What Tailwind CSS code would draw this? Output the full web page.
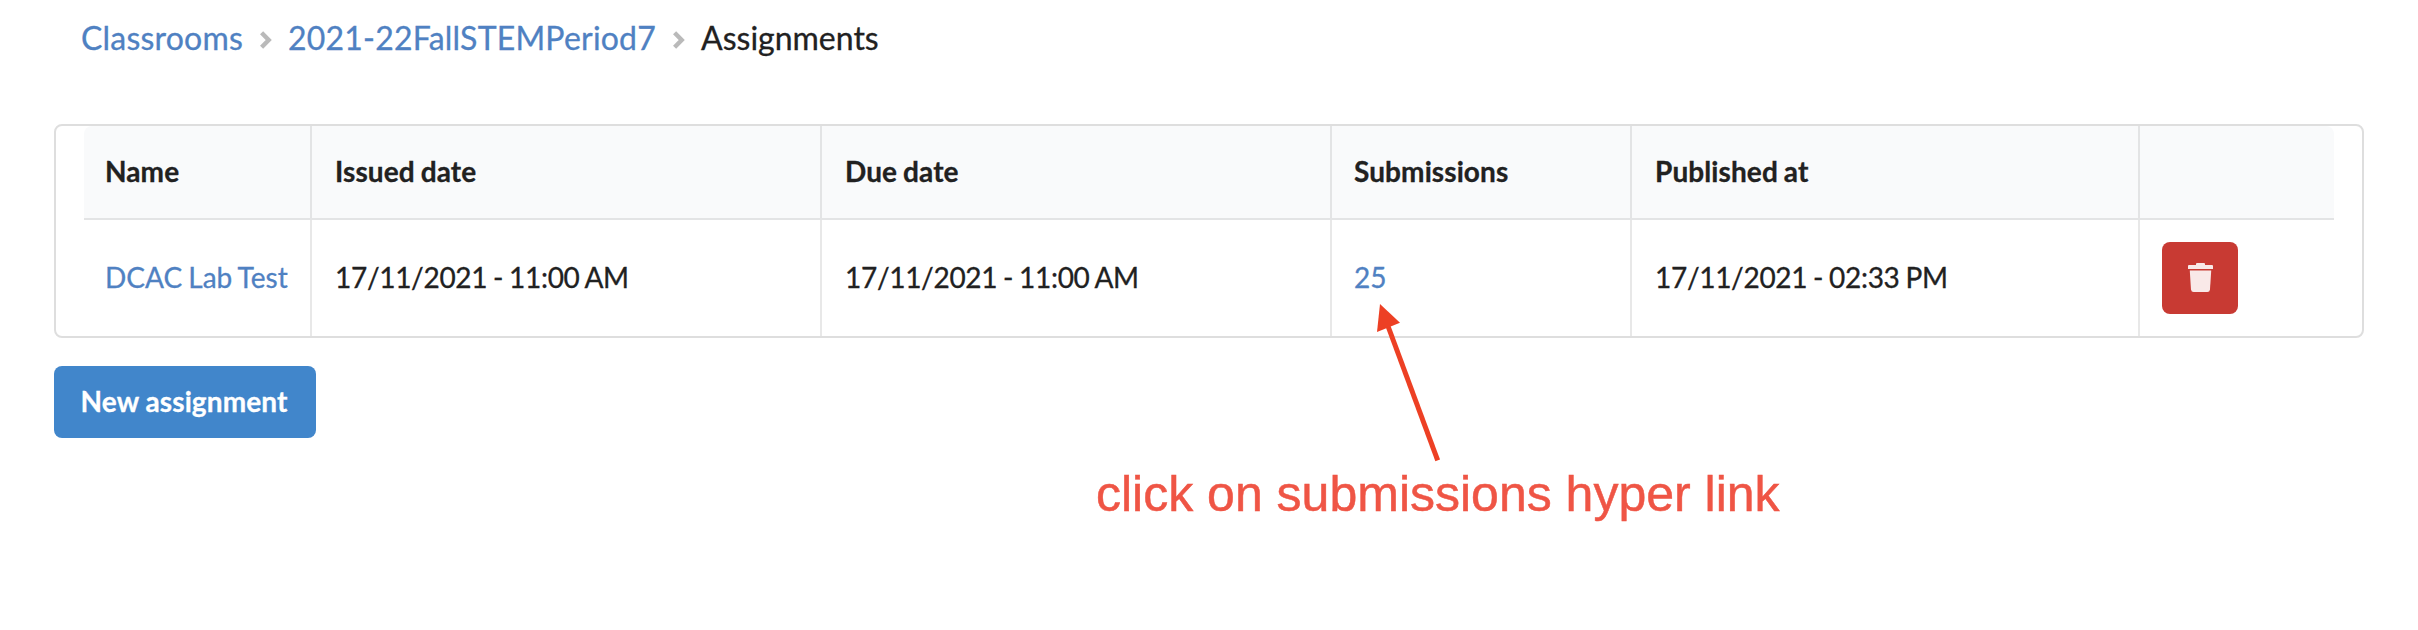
<!DOCTYPE html>
<html lang="en">
<head>
  <meta charset="UTF-8" />
  <meta name="viewport" content="width=device-width, initial-scale=1.0" />
  <title>Assignments</title>
  <script src="https://cdn.jsdelivr.net/npm/@tailwindcss/browser@4"></script>
</head>
<body class="relative min-h-screen overflow-hidden bg-white font-[Lato,sans-serif] text-[28px] leading-9 text-[#212121] [-webkit-text-stroke:0.3px]">

  <!-- Breadcrumb -->
  <nav class="flex h-[124px] items-start pt-[17px] pl-[81px] text-[32px] leading-[42px]">
    <a href="#" class="w-[163px] tracking-[0.2px] whitespace-nowrap text-[#4f81c2]">Classrooms</a>
    <svg class="mt-[14px] ml-4 h-[18px] w-3" viewBox="0 0 12 18" fill="none" stroke="#bababa" stroke-width="4.4"><path d="M1.6 1.8L8.7 9L1.6 16.2" /></svg>
    <a href="#" class="ml-4 w-[368px] tracking-[0.2px] whitespace-nowrap text-[#4f81c2]">2021-22FallSTEMPeriod7</a>
    <svg class="mt-[14px] ml-[17px] h-[18px] w-3" viewBox="0 0 12 18" fill="none" stroke="#bababa" stroke-width="4.4"><path d="M1.6 1.8L8.7 9L1.6 16.2" /></svg>
    <span class="ml-4">Assignments</span>
  </nav>

  <!-- Assignments Table -->
  <div class="ml-[54px] h-[214px] w-[2310px] rounded-lg border-2 border-[#dedede] px-7">
    <table class="w-[2250px] table-fixed border-separate border-spacing-0 text-left">
      <colgroup>
        <col class="w-[226px]" />
        <col class="w-[510px]" />
        <col class="w-[510px]" />
        <col class="w-[300px]" />
        <col class="w-[508px]" />
        <col class="w-[196px]" />
      </colgroup>
      <thead>
        <tr class="h-[94px] tracking-[0.1px] [word-spacing:-1px]">
          <th class="rounded-tl-lg border-b-2 border-[#e3e4e5] bg-[#f9fafb] pt-0 pr-0 pb-0.5 pl-[21px] font-bold">Name</th>
          <th class="border-b-2 border-l-2 border-[#e3e4e5] bg-[#f9fafb] pt-0 pb-0.5 pl-[23px] font-bold">Issued date</th>
          <th class="border-b-2 border-l-2 border-[#e3e4e5] bg-[#f9fafb] pt-0 pb-0.5 pl-[23px] font-bold">Due date</th>
          <th class="border-b-2 border-l-2 border-[#e3e4e5] bg-[#f9fafb] pt-0 pb-0.5 pl-[22px] font-bold">Submissions</th>
          <th class="border-b-2 border-l-2 border-[#e3e4e5] bg-[#f9fafb] pt-0 pb-0.5 pl-[23px] font-bold">Published at</th>
          <th class="rounded-tr-lg border-b-2 border-l-2 border-[#e3e4e5] bg-[#f9fafb]"></th>
        </tr>
      </thead>
      <tbody>
        <tr class="h-[116px] [word-spacing:-1px]">
          <td class="pt-0 pb-0.5 pl-[21px] whitespace-nowrap"><a href="#" class="text-[#4f81c2]">DCAC Lab Test</a></td>
          <td class="border-l-2 border-[#e8e8e8] pt-0 pb-0.5 pl-[23px] tracking-[-0.3px]">17/11/2021 - 11:00 AM</td>
          <td class="border-l-2 border-[#e8e8e8] pt-0 pb-0.5 pl-[23px] tracking-[-0.3px]">17/11/2021 - 11:00 AM</td>
          <td class="border-l-2 border-[#e8e8e8] pt-0 pb-0.5 pl-[22px]"><a href="#" class="text-[#4f81c2]">25</a></td>
          <td class="border-l-2 border-[#e8e8e8] pt-0 pb-0.5 pl-[23px] tracking-[-0.3px]">17/11/2021 - 02:33 PM</td>
          <td class="border-l-2 border-[#e8e8e8] py-0 pl-[22px]">
            <button type="button" aria-label="Delete" class="flex h-[72px] w-[76px] items-center justify-center rounded-lg bg-[#c83a33]">
              <svg class="-mt-0.5 h-[29px] w-[25px]" viewBox="0 0 25 29" fill="#f9e9e8">
                <path d="M1 2H8V1Q8 0 9 0H16Q17 0 17 1V2H24Q25 2 25 3V6H0V3Q0 2 1 2Z" />
                <path d="M1.8 7.4H23.2L22 26.5Q21.7 29 19.4 29H5.6Q3.3 29 3 26.5Z" />
              </svg>
            </button>
          </td>
        </tr>
      </tbody>
    </table>
  </div>

  <button type="button" class="mt-7 ml-[54px] block h-[72px] w-[262px] rounded-lg bg-[#4186cb] pr-0.5 pb-0.5 font-bold tracking-[0.1px] whitespace-nowrap text-white">New assignment</button>

  <!-- Annotation -->
  <svg class="absolute top-[300px] left-[1370px] h-[166px] w-[80px]" viewBox="0 0 80 166">
    <path d="M15 18L67.7 160.3" fill="none" stroke="#ed4024" stroke-width="5" />
    <path d="M10 4L30 22.8L7 32Z" fill="#ed4024" />
  </svg>
  <p class="absolute top-[465px] left-[1096px] font-['Liberation_Sans',sans-serif] text-[50px] leading-[58px] whitespace-nowrap text-[#ef5545] [-webkit-text-stroke:0.5px]">click on submissions hyper link</p>

</body>
</html>
